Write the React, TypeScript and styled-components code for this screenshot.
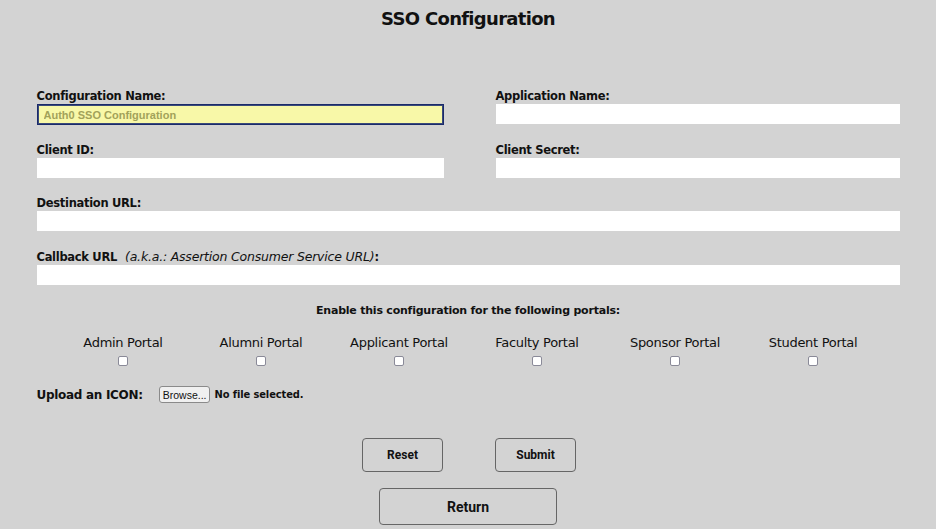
import React from 'react';
import styled, { createGlobalStyle } from 'styled-components';

const Global = createGlobalStyle`
  html, body {
    margin: 0;
    padding: 0;
    background: #d3d3d3;
  }
  body {
    font-family: "DejaVu Sans", "Liberation Sans", sans-serif;
    color: #111;
  }
`;

const Page = styled.div`
  width: 863px;
  margin: 0 auto;
  padding-top: 8px;
`;

const Title = styled.h1`
  margin: 0;
  text-align: center;
  font-size: 18px;
  font-weight: bold;
  letter-spacing: -0.7px;
`;

const Form = styled.form`
  margin-top: 60px;
  display: flex;
  flex-direction: column;
`;

const Fields = styled.div`
  display: flex;
  flex-direction: column;
  gap: 18px;
`;

const Row = styled.div`
  display: grid;
  grid-template-columns: 407px 1fr;
  column-gap: 52px;
`;

const Field = styled.div<{ $wide?: boolean }>`
  grid-column: ${p => (p.$wide ? '1 / -1' : 'auto')};
  display: flex;
  flex-direction: column;
`;

const Label = styled.label`
  font-size: 11.5px;
  font-weight: bold;
  letter-spacing: -0.3px;
  line-height: 15px;
`;

const Aka = styled.span`
  font-weight: normal;
  font-style: italic;
  font-size: 12.5px;
  letter-spacing: -0.2px;
  margin-left: 8px;
`;

const Input = styled.input<{ $active?: boolean }>`
  box-sizing: border-box;
  height: ${p => (p.$active ? '21px' : '20px')};
  width: 100%;
  margin: 0;
  padding: 0 6px;
  border: ${p => (p.$active ? '1px solid #1a2a6a' : '1px solid #fff')};
  background: ${p => (p.$active ? '#f8f8a8' : '#fff')};
  box-shadow: ${p => (p.$active ? 'inset 0 0 0 1px #3a4a7a' : 'none')};
  font-family: "Liberation Sans", Arial, sans-serif;
  font-size: 11px;
  font-weight: bold;
  outline: none;
  &::placeholder {
    color: #a2a25a;
  }
`;

const Heading = styled.div`
  margin-top: 19px;
  text-align: center;
  font-size: 11px;
  font-weight: bold;
  letter-spacing: -0.22px;
`;

const Portals = styled.div`
  display: grid;
  grid-template-columns: repeat(6, 138px);
  justify-content: center;
  margin-top: 18px;
`;

const Portal = styled.label`
  display: flex;
  flex-direction: column;
  align-items: center;
  gap: 6px;
  font-size: 13px;
  letter-spacing: -0.3px;
`;

const Check = styled.input`
  margin: 0;
  width: 10px;
  height: 10px;
  appearance: none;
  background: #fff;
  border: 1px solid #8a8a98;
  border-radius: 2px;
`;

const Upload = styled.div`
  display: flex;
  align-items: center;
  margin-top: 20px;
  font-size: 12px;
  font-weight: bold;
  letter-spacing: -0.3px;
`;

const Browse = styled.button`
  margin-left: 16px;
  height: 17px;
  padding: 0 3px;
  border: 1px solid #8a8a8a;
  border-radius: 3px;
  background: #f0f0f0;
  font-family: "Liberation Sans", Arial, sans-serif;
  font-size: 10.5px;
  color: #111;
`;

const NoFile = styled.span`
  margin-left: 4px;
  font-family: "DejaVu Sans Condensed", "DejaVu Sans", sans-serif;
  font-size: 11px;
  font-weight: bold;
  letter-spacing: -0.1px;
`;

const Buttons = styled.div`
  display: flex;
  justify-content: center;
  gap: 52px;
  margin-top: 35px;
  padding-left: 2px;
`;

const Button = styled.button<{ $big?: boolean }>`
  box-sizing: border-box;
  width: ${p => (p.$big ? '178px' : '81px')};
  height: ${p => (p.$big ? '37px' : '34px')};
  border: 1px solid #666;
  border-radius: 4px;
  background: transparent;
  font-family: Roboto, "Liberation Sans", sans-serif;
  font-size: ${p => (p.$big ? '14px' : '12px')};
  font-weight: bold;
  color: #111;
`;

const ReturnRow = styled.div`
  display: flex;
  justify-content: center;
  margin-top: 16px;
`;

const portals = [
  'Admin Portal',
  'Alumni Portal',
  'Applicant Portal',
  'Faculty Portal',
  'Sponsor Portal',
  'Student Portal',
];

const App: React.FC = () => {
  return (
    <Page>
      <Global />
      <Title>SSO Configuration</Title>
      <Form onSubmit={e => e.preventDefault()}>
        <Fields>
          <Row>
            <Field>
              <Label>Configuration Name:</Label>
              <Input $active placeholder="Auth0 SSO Configuration" />
            </Field>
            <Field>
              <Label>Application Name:</Label>
              <Input />
            </Field>
          </Row>
          <Row>
            <Field>
              <Label>Client ID:</Label>
              <Input />
            </Field>
            <Field>
              <Label>Client Secret:</Label>
              <Input />
            </Field>
          </Row>
          <Row>
            <Field $wide>
              <Label>Destination URL:</Label>
              <Input />
            </Field>
          </Row>
          <Row>
            <Field $wide>
              <Label>
                Callback URL<Aka>(a.k.a.: Assertion Consumer Service URL)</Aka>:
              </Label>
              <Input />
            </Field>
          </Row>
        </Fields>
        <Heading>Enable this configuration for the following portals:</Heading>
        <Portals>
          {portals.map(p => (
            <Portal key={p}>
              {p}
              <Check type="checkbox" />
            </Portal>
          ))}
        </Portals>
        <Upload>
          Upload an ICON:
          <Browse type="button">Browse...</Browse>
          <NoFile>No file selected.</NoFile>
        </Upload>
        <Buttons>
          <Button type="reset">Reset</Button>
          <Button type="submit">Submit</Button>
        </Buttons>
      </Form>
      <ReturnRow>
        <Button $big type="button">Return</Button>
      </ReturnRow>
    </Page>
  );
};

export default App;
